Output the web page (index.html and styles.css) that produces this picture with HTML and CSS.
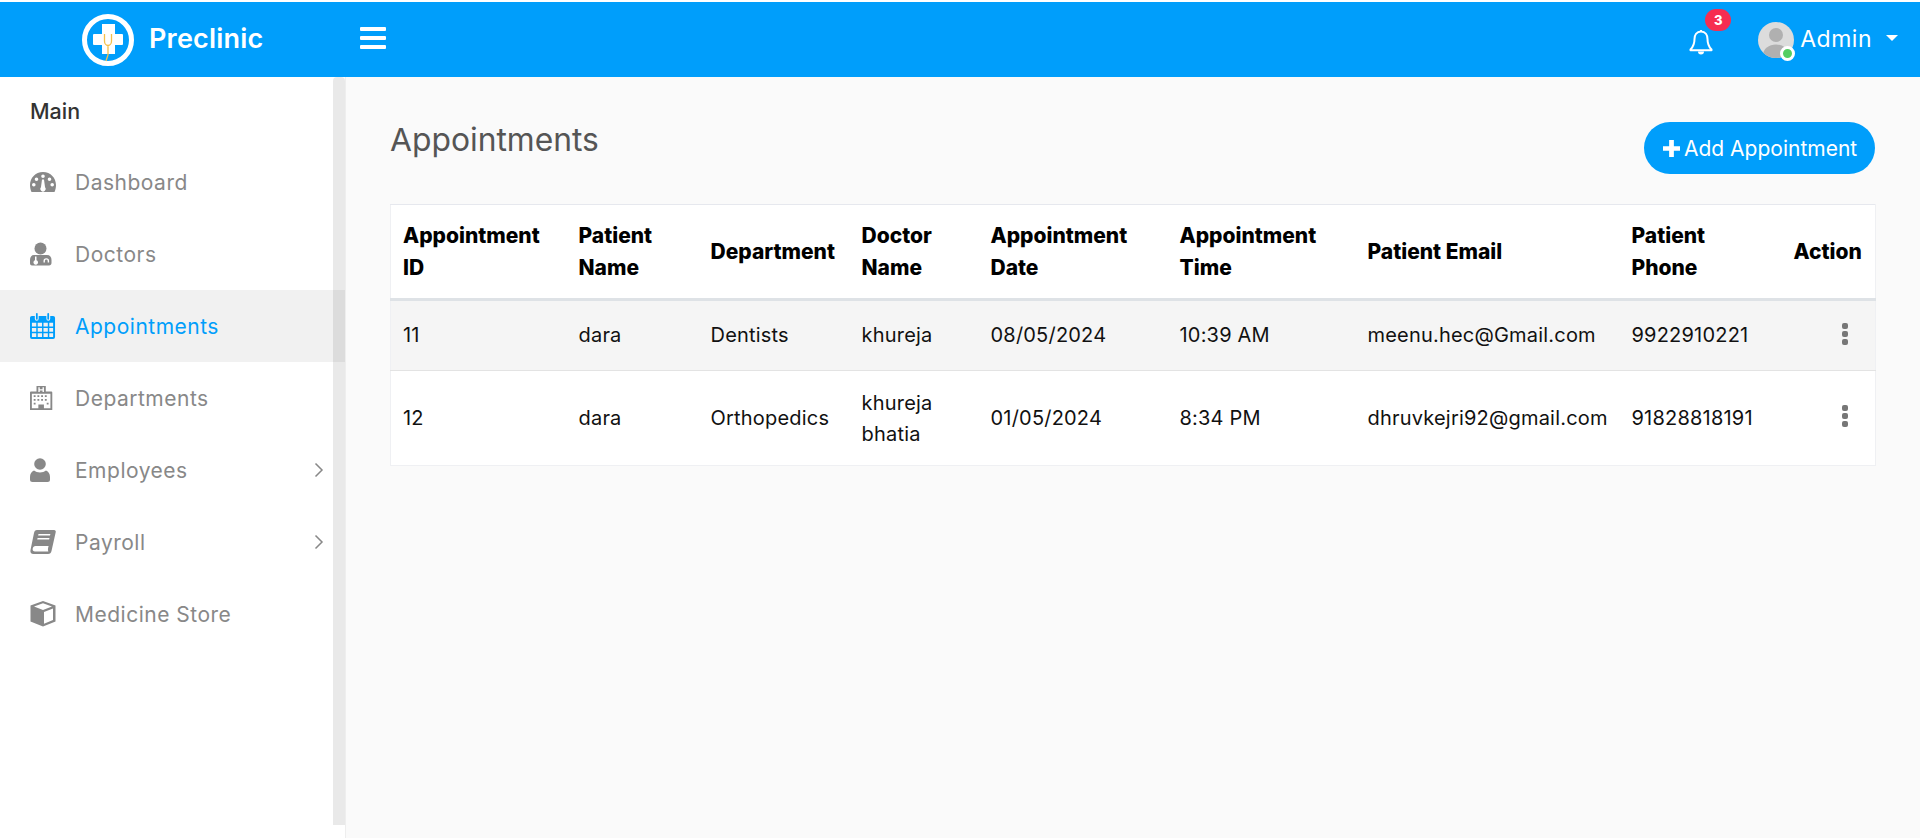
FILE: index.html
```html
<!DOCTYPE html>
<html lang="en">
<head>
<meta charset="utf-8">
<title>Preclinic - Appointments</title>
<link rel="stylesheet" href="styles.css">
</head>
<body>
<header class="topbar">
  <a class="brand">
    <svg class="logo" viewBox="0 0 52 52"><circle cx="26" cy="26" r="23.500" fill="none" stroke="#fff" stroke-width="5"/><path d="M20 10h13v10h7a1 1 0 0 1 1 1v9a1 1 0 0 1-1 1h-7v9H20v-9h-8a1 1 0 0 1-1-1v-9a1 1 0 0 1 1-1h8z" fill="#fff"/><path d="M22.500 20v7a3.500 4.500 0 0 0 7 0v-7M26 31.500V41l-2 6" fill="none" stroke="#f5c04a" stroke-width="1.300"/></svg>
    <span class="brand-name">Preclinic</span>
  </a>
  <button class="menu-toggle" aria-label="Menu"><span></span><span></span><span></span></button>
  <div class="top-right">
    <div class="bell">
      <svg viewBox="0 0 24 26"><path d="M12 2.500c-4.500 0-6.500 3.500-6.500 7.500 0 5-1.500 8-4 10.500v.8h21v-.8c-2.500-2.500-4-5.500-4-10.500 0-4-2-7.500-6.500-7.500zM12 1v2" fill="none" stroke="#fff" stroke-width="2" stroke-linejoin="round"/><path d="M9 22.500h6a3 3 0 0 1-6 0z" fill="#fff"/></svg>
      <span class="badge">3</span>
    </div>
    <div class="user">
      <span class="avatar">
        <svg viewBox="0 0 36 36"><defs><clipPath id="av"><circle cx="18" cy="18" r="18"/></clipPath></defs><g clip-path="url(#av)"><rect width="36" height="36" fill="#dcdcdc"/><circle cx="18" cy="13" r="7" fill="#b0b0b0"/><ellipse cx="18" cy="33" rx="13" ry="10.500" fill="#b0b0b0"/></g></svg>
        <span class="status"></span>
      </span>
      <span class="user-name">Admin</span>
      <span class="caret"></span>
    </div>
  </div>
</header>
<div class="layout">
  <aside class="sidebar">
    <div class="menu-title">Main</div>
    <nav class="menu">
      <a class="item">
        <svg class="ico" viewBox="1 1 26 22" preserveAspectRatio="xMinYMid"><path fill-rule="evenodd" d="M14 2C6.300 2 1 8 1 15c0 2.500.6 5 1.500 7h23c.9-2 1.500-4.500 1.500-7C27 8 21.700 2 14 2zM14 4.500a1.800 1.800 0 1 1 0 3.600 1.800 1.800 0 0 1 0-3.600zM7.500 7.500a1.800 1.800 0 1 1 0 3.600 1.800 1.800 0 0 1 0-3.600zM20.500 7.500a1.800 1.800 0 1 1 0 3.600 1.800 1.800 0 0 1 0-3.600zM4.800 13a1.800 1.800 0 1 1 0 3.600 1.800 1.800 0 0 1 0-3.600zM23.200 13a1.800 1.800 0 1 1 0 3.600 1.800 1.800 0 0 1 0-3.600zM15 9.500l1 7.500a2.700 2.700 0 1 1-4 0l1-7.500z"/></svg>
        <span>Dashboard</span>
      </a>
      <a class="item">
        <svg class="ico" viewBox="0 -1 24 26" preserveAspectRatio="xMinYMid"><circle cx="10.500" cy="6.500" r="6"/><path fill-rule="evenodd" d="M4 13h13c3 0 4.500 2 4.500 5v3c0 1.500-1 2.500-2.500 2.500H2C.5 23.500 0 22.500 0 21v-3c0-3 1.500-5 4-5zM5 14.500v3.800a2.300 2.300 0 1 0 1.500 0v-3.800zM13.500 20.500v-1.500a2.800 2.800 0 0 1 5.600 0v1.500h-1.400v-1.500a1.400 1.400 0 0 0-2.800 0v1.500z"/></svg>
        <span>Doctors</span>
      </a>
      <a class="item active">
        <svg class="ico" viewBox="0 0 26 27" preserveAspectRatio="xMinYMid"><path fill-rule="evenodd" d="M2 3h3v3a2 2 0 0 0 4 0V3h8v3a2 2 0 0 0 4 0V3h3a2 2 0 0 1 2 2v20a2 2 0 0 1-2 2H2a2 2 0 0 1-2-2V5a2 2 0 0 1 2-2zM2 10v4h4.500v-4zM8 10v4h4.500v-4zM14 10v4h4.500v-4zM20 10v4h4v-4zM2 15.500v4h4.500v-4zM8 15.500v4h4.500v-4zM14 15.500v4h4.500v-4zM20 15.500v4h4v-4zM2 21v4h4.500v-4zM8 21v4h4.500v-4zM14 21v4h4.500v-4zM20 21v4h4v-4z"/><rect x="6.200" y="0" width="1.800" height="7" rx=".9"/><rect x="18" y="0" width="1.800" height="7" rx=".9"/></svg>
        <span>Appointments</span>
      </a>
      <a class="item">
        <svg class="ico" viewBox="0 0 24 28" preserveAspectRatio="xMinYMid"><path fill-rule="evenodd" d="M7 1h10v6h6a1 1 0 0 1 1 1v19H0V8a1 1 0 0 1 1-1h6zM9 2.500v5h1.500V5.800h3v1.700H15v-5h-1.500v2h-3v-2zM2 9.500V25h7v-4h6v4h7V9.500zM4 11h2v2H4zM8 11h2v2H8zM12 11h2v2h-2zM16 11h2v2h-2zM4 15h2v2H4zM8 15h2v2H8zM12 15h2v2h-2zM16 15h2v2h-2zM4 19h2v2H4zM18 19h2v2h-2z"/></svg>
        <span>Departments</span>
      </a>
      <a class="item">
        <svg class="ico" viewBox="0 -1 20 26" preserveAspectRatio="xMinYMid"><circle cx="10" cy="6" r="5.800"/><path d="M4 12.500c3 2.500 9 2.500 12 0 2.500 1 4 3.500 4 6.500v2.500a2.500 2.500 0 0 1-2.500 2.500h-15A2.500 2.500 0 0 1 0 21.500V19c0-3 1.500-5.500 4-6.500z"/></svg>
        <span>Employees</span>
        <svg class="chev" viewBox="0 0 10 16"><path d="M1.500 1.500L8 8l-6.500 6.500" fill="none" stroke="currentColor" stroke-width="1.500"/></svg>
      </a>
      <a class="item">
        <svg class="ico" viewBox="0 0 26 24" preserveAspectRatio="xMinYMid"><path fill-rule="evenodd" d="M7 0h17c1.500 0 2 1 1.700 2.200L21.500 21c-.4 1.800-1.500 3-3.500 3H3.500C1.200 24 0 22.500.5 20L4 3C4.400 1 5.300 0 7 0zM8.500 4l-.4 1.500H20L20.400 4zM7.600 8l-.4 1.500h11.900L19.500 8zM5.500 16c-1.500 0-2.500.8-2.800 2.700-.3 1.800.6 2.800 2.300 2.800h13c.4 0 .6-.2.400-.4-.5-.5-.6-1.800-.2-3.700l.4-1.400z"/></svg>
        <span>Payroll</span>
        <svg class="chev" viewBox="0 0 10 16"><path d="M1.500 1.500L8 8l-6.500 6.500" fill="none" stroke="currentColor" stroke-width="1.500"/></svg>
      </a>
      <a class="item">
        <svg class="ico" viewBox="0 0 26 26" preserveAspectRatio="xMinYMid"><path fill-rule="evenodd" d="M13 0l12.500 4.500v16L13 25.500.5 20.500v-16zM13 2.300L4 5.500l9 3.400 9-3.400zM14 11v11.700l9-3.600V7.600z"/></svg>
        <span>Medicine Store</span>
      </a>
    </nav>
    <div class="scroll-thumb"></div>
  </aside>
  <main class="content">
    <div class="page-head">
      <h1>Appointments</h1>
      <a class="add-btn"><svg viewBox="0 0 18 18"><path d="M6.500 0h5v6.500H18v5h-6.500V18h-5v-6.500H0v-5h6.500z"/></svg>Add Appointment</a>
    </div>
    <table class="grid">
      <colgroup>
        <col class="c1"><col class="c2"><col class="c3"><col class="c4"><col class="c5"><col class="c6"><col class="c7"><col class="c8"><col class="c9">
      </colgroup>
      <thead>
        <tr>
          <th>Appointment ID</th><th>Patient Name</th><th>Department</th><th>Doctor Name</th><th>Appointment Date</th><th>Appointment Time</th><th>Patient Email</th><th>Patient Phone</th><th>Action</th>
        </tr>
      </thead>
      <tbody>
        <tr class="odd">
          <td>11</td><td>dara</td><td>Dentists</td><td>khureja</td><td>08/05/2024</td><td>10:39 AM</td><td>meenu.hec@Gmail.com</td><td>9922910221</td>
          <td class="act"><span class="dots"><i></i><i></i><i></i></span></td>
        </tr>
        <tr class="even">
          <td>12</td><td>dara</td><td>Orthopedics</td><td>khureja bhatia</td><td>01/05/2024</td><td>8:34 PM</td><td>dhruvkejri92@gmail.com</td><td>91828818191</td>
          <td class="act"><span class="dots"><i></i><i></i><i></i></span></td>
        </tr>
      </tbody>
    </table>
  </main>
</div>
</body>
</html>
```

FILE: styles.css
```css
* { box-sizing: border-box; }
html, body { height: 100%; }
body {
  margin: 0;
  padding-top: 2px;
  height: 838px;
  overflow: hidden;
  background: #fff;
  font-family: Inter, "Noto Sans", sans-serif;
  color: #000;
  display: flex;
  flex-direction: column;
}
.topbar {
  height: 75px;
  flex: none;
  background: #009efb;
  display: flex;
  align-items: center;
  color: #fff;
}
.brand { display: flex; align-items: center; margin-left: 82px; width: 278px; }
.logo { width: 52px; height: 52px; display: block; }
.brand-name { margin: -2px 0 0 15px; font-size: 27px; font-weight: 600; letter-spacing: .2px; }
.menu-toggle {
  width: 26px; height: 22px; padding: 0; border: 0; background: none; margin-top: -3px;
  display: flex; flex-direction: column; justify-content: space-between;
}
.menu-toggle span { display: block; height: 4px; background: #fff; border-radius: 1px; }
.top-right { margin-left: auto; display: flex; align-items: center; }
.bell { position: relative; width: 24px; height: 26px; margin-right: 45px; margin-top: 5px; }
.bell svg { display: block; width: 24px; height: 26px; }
.badge {
  position: absolute; left: 16px; top: -20px; width: 26px; height: 22px;
  background: #f62d51; border-radius: 11px; color: #fff;
  font-size: 13px; font-weight: 800; line-height: 22px; text-align: center;
}
.user { display: flex; align-items: center; margin-right: 22px; }
.avatar { position: relative; width: 36px; height: 36px; margin-right: 6px; }
.avatar svg { display: block; width: 36px; height: 36px; }
.status {
  position: absolute; right: -1px; bottom: -3px; width: 15px; height: 15px;
  border-radius: 50%; background: #55ce63; border: 3px solid #fff;
}
.user-name { font-size: 23px; letter-spacing: .5px; line-height: 26px; margin-top: -2px; }
.caret {
  margin-left: 14px; margin-top: -4px; width: 0; height: 0;
  border-left: 6.500px solid transparent; border-right: 6.500px solid transparent; border-top: 6.500px solid #fff;
}
.layout { flex: 1; display: flex; min-height: 0; }
.sidebar {
  position: relative; width: 346px; flex: none; background: #fff;
  border-right: 1px solid #eee;
}
.menu-title { padding: 20px 30px 0; height: 69px; font-size: 21.500px; font-weight: 500; color: #333; line-height: 28px; }
.menu { display: flex; flex-direction: column; }
.item {
  display: flex; align-items: center; height: 72px; padding: 0 20px 0 30px;
  color: #888; font-size: 21px; letter-spacing: .5px;
}
.item.active { background: #f1f1f1; color: #009efb; }
.ico { width: 26px; height: 26px; fill: currentColor; flex: none; margin-right: 19px; }
.item span { flex: 1; }
.chev { width: 10px; height: 16px; flex: none; margin-right: 1px; }
.scroll-thumb {
  position: absolute; left: 333px; top: 0; width: 12px; height: 748px;
  background: rgba(0,0,0,.085); border-radius: 4px 4px 0 0;
}
.content { flex: 1; background: #fafafa; padding: 45px 45px 0 44px; min-width: 0; }
.page-head { display: flex; justify-content: space-between; align-items: flex-start; height: 82px; }
h1 { margin: 0; font-size: 31.800px; font-weight: 400; line-height: 36px; color: #555; }
.add-btn {
  display: flex; align-items: center; height: 52px; width: 231px; padding-left: 19px;
  border-radius: 26px; background: #009efb; color: #fff; font-size: 21px;
}
.add-btn svg { width: 17px; height: 17px; fill: #fff; margin-right: 4px; }
.grid {
  width: 1485px; border-collapse: collapse; table-layout: fixed; background: #fff;
  border: 1px solid #eff0f3; border-top-color: #e6e8ee;
}
.c1 { width: 175px; } .c2 { width: 132px; } .c3 { width: 151px; } .c4 { width: 129px; }
.c5 { width: 189px; } .c6 { width: 188px; } .c7 { width: 264px; } .c8 { width: 162px; } .c9 { width: 95px; }
th, td { padding: 0 13px; text-align: left; vertical-align: middle; }
th:first-child, td:first-child { padding-left: 12px; }
th { font-size: 21px; line-height: 32px; font-weight: 800; color: #000; height: 95px; border-bottom: 3px solid #dee2e6; }
td { font-size: 20px; letter-spacing: .2px; line-height: 31px; color: #111; }
.odd td { background: #f5f5f5; height: 71px; border-bottom: 1px solid #e3e3e3; }
.even td { height: 95px; padding-top: 1px; }
th:last-child { padding-right: 0; }
.act, .even .act { text-align: right; padding: 0 27px 0 0; }
.dots { display: inline-flex; flex-direction: column; gap: 2px; vertical-align: middle; margin-top: -6px; }
.dots i { display: block; width: 6px; height: 6px; border-radius: 2px; background: #777; }
```
